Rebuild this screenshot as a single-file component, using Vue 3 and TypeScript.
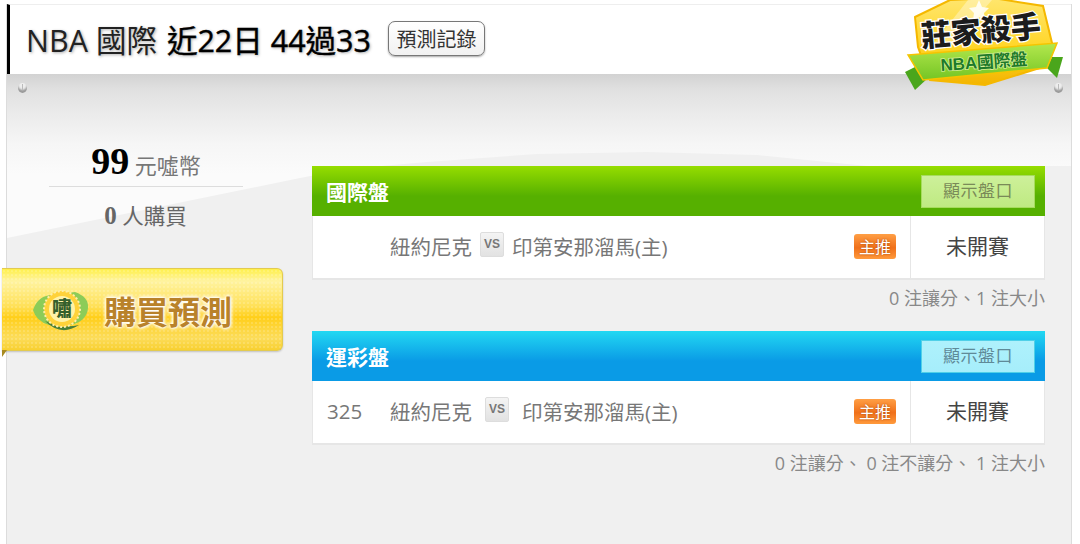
<template>
  <div class="page">
    <header class="topbar">
      <h1 class="title">
        <span class="league">NBA 國際</span>
        <span class="record">近22日 44過33</span>
      </h1>
      <button class="history" type="button">預測記錄</button>
      <svg class="crest" viewBox="0 0 170 95" width="170" height="95">
        <defs>
          <linearGradient id="hexFill" x1="0" y1="0" x2="0" y2="1">
            <stop offset="0" stop-color="#ffe66e" />
            <stop offset="0.55" stop-color="#ffd62a" />
            <stop offset="1" stop-color="#f3b400" />
          </linearGradient>
          <linearGradient id="ribbonFill" x1="0" y1="0" x2="0" y2="1">
            <stop offset="0" stop-color="#b4e84e" />
            <stop offset="1" stop-color="#74c524" />
          </linearGradient>
        </defs>
        <polygon points="15,17 50,0 93,-2 143,6 152,43 140,68 85,85 30,80 18,47" fill="url(#hexFill)" stroke="#f5b800" stroke-width="2" />
        <polygon points="68,0 92,0 50,48 30,48" fill="#fff" opacity="0.35" />
        <polygon points="79,0 82,7 89,8 84,13 85,20 79,17 73,20 74,13 69,8 76,7" fill="#fff" opacity="0.85" />
        <polygon points="5,72 15,90 28,78 15,67" fill="#4aa61c" />
        <polygon points="152,57 163,57 157,78 147,68" fill="#4aa61c" />
        <polygon points="8,55 157,43 147,68 23,80" fill="url(#ribbonFill)" stroke="#f6c400" stroke-width="1.5" />
        <text class="crest-title" x="22" y="47" transform="rotate(-5 22 47)" textLength="120">莊家殺手</text>
        <text class="crest-sub" x="41" y="71" transform="rotate(-4 41 71)" textLength="87">NBA國際盤</text>
      </svg>
    </header>

    <div class="body">
      <div class="sheen"></div>
      <span class="pin pin-left"></span>
      <span class="pin pin-right"></span>

      <aside class="side">
        <div class="price"><b>99</b> 元噓幣</div>
        <div class="buyers"><b>0</b> 人購買</div>
        <a class="buy" href="#">
          <svg class="buy-logo" viewBox="0 0 56 44" width="56" height="44">
            <path d="M0 22 Q5 7 20 7 L42 4 Q56 9 55 20 Q54 33 38 37 L16 37 Q3 33 0 22Z" fill="#8ccc58" />
            <path d="M12 33 Q28 49 46 37 Q30 41 12 33Z" fill="#4a7f3a" />
            <circle cx="29" cy="21" r="18" fill="#ffd23a" stroke="#ffeea8" stroke-width="2" stroke-dasharray="2 2" />
            <circle cx="29" cy="21" r="13" fill="#fff2a8" />
            <text x="29" y="28" text-anchor="middle" class="logo-char">嘯</text>
          </svg>
          <span class="buy-text">購買預測</span>
        </a>
      </aside>

      <main class="main">
        <section v-for="p in panels" :key="p.name" class="panel" :class="p.tone">
          <div class="panel-head">
            <h2>{{ p.name }}</h2>
            <button class="show" type="button">顯示盤口</button>
          </div>
          <div class="row">
            <div class="match">
              <span class="num">{{ p.num }}</span>
              <span>紐約尼克</span>
              <span class="vs">VS</span>
              <span>印第安那溜馬(主)</span>
              <span class="tag">主推</span>
            </div>
            <div class="status">未開賽</div>
          </div>
          <p class="note">{{ p.note }}</p>
        </section>
      </main>
    </div>
  </div>
</template>

<script setup lang="ts">
const panels = [
  { name: '國際盤', tone: 'green', num: '', note: '0 注讓分、1 注大小' },
  { name: '運彩盤', tone: 'blue', num: '325', note: '0 注讓分、 0 注不讓分、 1 注大小' },
];
</script>

<style scoped>
.page {
  width: 1064px;
  height: 540px;
  margin: 4px 0 0 6px;
  border-left: 1px solid #dcdcdc;
  border-right: 1px solid #dcdcdc;
  background: #f0f0f0;
  font-family: 'Open Sans', 'Noto Sans CJK TC', sans-serif;
}

.topbar {
  position: relative;
  display: flex;
  align-items: center;
  gap: 17px;
  height: 70px;
  box-sizing: border-box;
  padding: 0 0 2px 16px;
  border-left: 3px solid #000;
  border-top: 1px solid #eee;
  background: #fff;
  z-index: 2;
}

.title {
  margin: 0;
  font-size: 30.5px;
  font-weight: 400;
  color: #222;
  white-space: nowrap;
  text-shadow: 1px 1px 3px rgba(0, 0, 0, 0.35);
}

.league {
  margin-right: 10px;
}

.record {
  color: #000;
  -webkit-text-stroke: 0.4px #000;
}

.history {
  width: 97px;
  height: 35px;
  padding: 0;
  border: 1px solid #777;
  border-radius: 7px;
  background: linear-gradient(#fff, #f1f1f1);
  box-shadow: 0 1px 2px rgba(0, 0, 0, 0.35);
  font: 400 20px 'Noto Sans CJK TC', sans-serif;
  color: #333;
}

.crest {
  position: absolute;
  left: 890px;
  top: -5px;
  overflow: visible;
}

.crest-title {
  font: 900 30px 'Noto Sans CJK TC', sans-serif;
  fill: #1c1c1c;
  stroke: #fff;
  stroke-width: 2.5px;
  paint-order: stroke;
}

.crest-sub {
  font: 700 17px 'Liberation Sans', 'Noto Sans CJK TC', sans-serif;
  fill: #1e7a2a;
  stroke: #d5f09a;
  stroke-width: 1.5px;
  paint-order: stroke;
}

.body {
  position: relative;
  display: flex;
  height: 470px;
}

.sheen {
  position: absolute;
  inset: 0;
  background: linear-gradient(#d2d2d2, #e0e0e0 15px, #ebebeb 40px, #f6f6f6 70px, #fbfbfb 100px);
  clip-path: polygon(0 0, 100% 0, 100% 92px, 860px 92px, 750px 81px, 640px 78px, 530px 80px, 420px 88px, 340px 95px, 293px 104px, 0 164px);
}

.pin {
  position: absolute;
  top: 9px;
  width: 9px;
  height: 10px;
  border-radius: 50%;
  background: #eee;
  box-shadow: inset 0 -3px 2px #999;
}

.pin::after {
  content: '';
  position: absolute;
  left: 4px;
  top: 1px;
  width: 1px;
  height: 6px;
  background: #bbb;
}

.pin-left {
  left: 11px;
}

.pin-right {
  right: 8px;
}

.side {
  position: relative;
  flex: none;
  width: 276px;
  margin-left: -5px;
  padding-top: 62px;
  text-align: center;
}

.price {
  width: 194px;
  height: 51px;
  margin-left: 47px;
  border-bottom: 1px solid #ddd;
  box-sizing: border-box;
  font-size: 22px;
  line-height: 58px;
  color: #777;
  white-space: nowrap;
}

.price b {
  font: 700 38px 'Liberation Serif', serif;
  color: #000;
}

.buyers {
  margin-top: 8px;
  padding-left: 11px;
  font-size: 21.5px;
  line-height: 42px;
  color: #666;
}

.buyers b {
  font: 700 25px 'Liberation Serif', serif;
  color: #666;
}

.buy {
  position: relative;
  display: flex;
  align-items: center;
  gap: 15px;
  width: 281px;
  height: 83px;
  margin-top: 31px;
  box-sizing: border-box;
  padding-left: 31px;
  border: 1px solid #e3cb50;
  border-left: 0;
  border-radius: 0 6px 6px 0;
  background:
    radial-gradient(rgba(255, 255, 255, 0.16) 1px, transparent 1.2px) 0 0 / 4px 4px,
    linear-gradient(#fff04a, #fff3a0 15%, #ffe15a 45%, #ffcf1a 60%, #fcdc5a 85%, #f8d030);
  box-shadow: 0 1px 2px rgba(0, 0, 0, 0.2);
  text-decoration: none;
}

.buy::after {
  content: '';
  position: absolute;
  left: 0;
  bottom: -7px;
  border-top: 7px solid #a88a20;
  border-left: 5px solid transparent;
  transform: scaleX(-1);
}

.buy-logo {
  flex: none;
}

.logo-char {
  font: 900 20px 'Noto Sans CJK TC', sans-serif;
  fill: #35602c;
}

.buy-text {
  font: 700 32px 'Noto Sans CJK TC', sans-serif;
  color: #b9822a;
  text-shadow: 0 0 2px #fff, 0 0 3px #fff, 0 0 4px #fff, 0 0 5px #fff;
}

.main {
  position: relative;
  flex: none;
  width: 733px;
  margin-left: 34px;
  padding-top: 92px;
}

.panel {
  height: 165px;
}

.panel-head {
  display: flex;
  align-items: center;
  justify-content: space-between;
  height: 50px;
  box-sizing: border-box;
  padding: 0 10px 0 14px;
}

.panel-head h2 {
  margin: 0;
  font-size: 21px;
  font-weight: 700;
  color: #fff;
}

.green .panel-head {
  background: linear-gradient(#96dd00, #56b000 60%);
}

.blue .panel-head {
  background: linear-gradient(#22d8f2, #0a9be6 60%);
}

.show {
  width: 114px;
  height: 33px;
  padding: 0 0 3px;
  font: 400 17px 'Noto Sans CJK TC', sans-serif;
  letter-spacing: 0.5px;
}

.green .show {
  border: 1px solid #a6dc5c;
  background: linear-gradient(#cdf09a, #bfea82);
  color: #7a8a58;
}

.blue .show {
  border: 1px solid #4fd0e8;
  background: linear-gradient(#aef1fc, #a6eefb);
  color: #5f8a98;
}

.row {
  display: flex;
  height: 64px;
  box-sizing: border-box;
  border: 1px solid #e6e6e6;
  border-top: 0;
  border-bottom-width: 2px;
  background: #fff;
  font-size: 20.5px;
  color: #777;
}

.match {
  display: flex;
  flex: 1;
  align-items: center;
  gap: 8px;
  padding: 0 14px 2px 0;
}

.num {
  width: 63px;
  margin-left: 14px;
  margin-right: -8px;
}

.blue .match > span:nth-child(3) {
  margin: 0 5px 4px;
}

.vs {
  display: flex;
  align-items: center;
  justify-content: center;
  width: 24px;
  height: 25px;
  margin-bottom: 4px;
  box-sizing: border-box;
  border: 1px solid #ddd;
  border-radius: 2px;
  background: linear-gradient(#f4f4f4, #e2e2e2);
  font: 700 12px 'Liberation Sans', sans-serif;
  color: #777;
}

.tag {
  margin-left: auto;
  width: 42px;
  height: 25px;
  border-radius: 3px;
  background: linear-gradient(#ff9f45, #f0701a 55%, #ff9a3c);
  font: 400 16px/25px 'Noto Sans CJK TC', sans-serif;
  text-align: center;
  color: #fff;
  text-shadow: 0 0 2px #a04000;
}

.status {
  flex: none;
  width: 133px;
  border-left: 1px solid #e6e6e6;
  font-size: 21px;
  line-height: 61px;
  text-align: center;
  color: #444;
}

.note {
  margin: 5px 0 0;
  font-size: 18px;
  line-height: 26px;
  text-align: right;
  color: #888;
  white-space: nowrap;
}
</style>

<style>
html,
body {
  margin: 0;
  background: #fff;
  overflow: hidden;
}
</style>
